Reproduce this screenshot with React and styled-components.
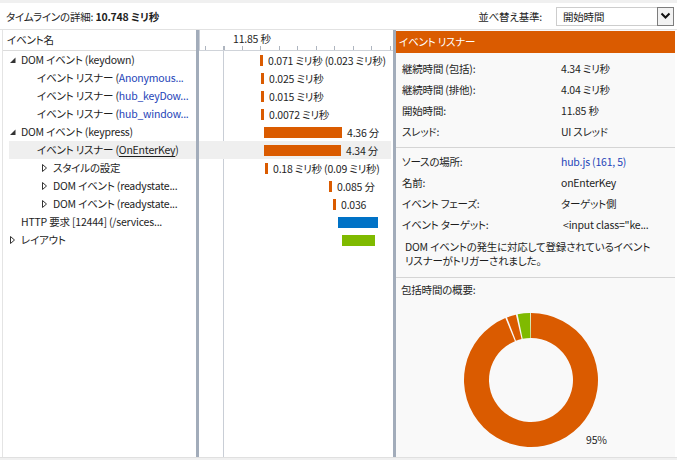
import React from 'react';
import styled, { createGlobalStyle } from 'styled-components';

const GlobalStyle = createGlobalStyle`
  html, body {
    margin: 0;
    padding: 0;
    background: #f0f0f0;
  }
  body {
    font-family: "Noto Sans CJK JP", "Noto Sans", sans-serif;
    font-size: 10.5px;
    letter-spacing: -0.2px;
    color: #1e1e1e;
    font-feature-settings: "palt";
  }
`;

const ORANGE = '#da5b00';
const BLUE_LINK = '#1e44b8';

const Page = styled.div`
  width: 677px;
  height: 460px;
  box-sizing: border-box;
  padding: 3px 0 2px 0;
  background: #f0f0f0;
  display: flex;
  flex-direction: column;
  overflow: hidden;
`;

const TopBar = styled.header`
  height: 26px;
  flex: none;
  background: #fff;
  border-bottom: 1px solid #e2e2e2;
  display: flex;
  align-items: center;
  justify-content: space-between;
  padding: 0 3px 0 6px;
`;

const Title = styled.div`
  white-space: nowrap;
  b {
    font-weight: 700;
  }
`;

const SortGroup = styled.div`
  display: flex;
  align-items: center;
  gap: 14px;
`;

const SortLabel = styled.span`
  white-space: nowrap;
`;

const Select = styled.div`
  width: 118px;
  height: 19px;
  box-sizing: border-box;
  border: 1px solid #cdcdcd;
  background: #fff;
  display: flex;
  align-items: stretch;
`;

const SelectValue = styled.span`
  flex: 1;
  padding-left: 6px;
  line-height: 17px;
`;

const DropButton = styled.span`
  width: 17px;
  box-sizing: border-box;
  border: 1px solid #7d7d7d;
  margin: -1px -1px -1px 0;
  background: #f2f2f2;
  display: flex;
  align-items: center;
  justify-content: center;
`;

const Main = styled.main`
  flex: 1;
  display: flex;
  background: #fff;
  border-bottom: 1px solid #e0e0e0;
  padding: 0 2px 0 2px;
  min-height: 0;
`;

const TreePane = styled.section`
  width: 193px;
  flex: none;
  border-left: 1px solid #e4e4e4;
  overflow: hidden;
`;

const ColumnHeader = styled.div`
  height: 20px;
  line-height: 20px;
  border-bottom: 1px solid #dcdcdc;
  padding-left: 4px;
`;

const Splitter = styled.div`
  width: 3px;
  flex: none;
  background: #a2acba;
`;

const TreeRow = styled.div`
  height: 18px;
  line-height: 18px;
  margin-left: 6px;
  padding-left: ${(p) => p.$level * 16}px;
  display: flex;
  align-items: center;
  white-space: nowrap;
  background: ${(p) => (p.$selected ? '#efefef' : 'transparent')};
`;

const Expander = styled.span`
  width: 12px;
  height: 18px;
  flex: none;
  display: inline-flex;
`;

const Link = styled.span`
  color: ${BLUE_LINK};
`;

const Underlined = styled.span`
  text-decoration: underline;
  text-underline-offset: 2px;
`;

const TimelinePane = styled.section`
  width: 194px;
  flex: none;
  overflow: hidden;
  background: linear-gradient(#c9ced6, #c9ced6) 24px 0 / 1px 100% no-repeat, #fff;
`;

const Ruler = styled.div`
  height: 20px;
  line-height: 18px;
  border-bottom: 1px solid #cfd3d9;
  padding-left: 34px;
  background: #fff;
  background-image: repeating-linear-gradient(
    to right,
    #aeb5bf 0 1px,
    transparent 1px 18.5px
  );
  background-position: 6px 100%;
  background-size: 100% 4px;
  background-repeat: no-repeat;
  box-shadow: inset 24px 0 0 -23px #c9ced6;
`;

const BarRow = styled.div`
  height: 18px;
  display: flex;
  align-items: center;
  white-space: nowrap;
  background: ${(p) => (p.$selected ? '#efefef' : 'transparent')};
  margin-right: 2px;
`;

const Bar = styled.span`
  flex: none;
  height: 11px;
  width: ${(p) => p.$width}px;
  margin-left: ${(p) => p.$start}px;
  background: ${(p) => p.$color};
`;

const BarLabel = styled.span`
  margin-left: 5px;
`;

const DetailPane = styled.section`
  flex: 1;
  min-width: 0;
  background: #f9f9f9;
  padding-top: 1px;
  display: flex;
  flex-direction: column;
`;

const DetailHeader = styled.div`
  height: 22px;
  line-height: 22px;
  background: ${ORANGE};
  color: #fff;
  padding-left: 3px;
`;

const Section = styled.div`
  padding: ${(p) => p.$pad};
  border-top: ${(p) => (p.$divider ? '1px solid #d5d5d5' : 'none')};
`;

const PropGrid = styled.div`
  display: grid;
  grid-template-columns: 159px 1fr;
  grid-auto-rows: 21px;
  align-items: center;
  padding-left: 6px;
  white-space: nowrap;
`;

const Value = styled.span`
  color: ${(p) => (p.$link ? BLUE_LINK : 'inherit')};
  padding-left: ${(p) => p.$shift || 0}px;
`;

const Description = styled.p`
  margin: 5px 0 0 9px;
  line-height: 14px;
`;

const ChartSection = styled.div`
  flex: 1;
  border-top: 1px solid #d5d5d5;
  padding: 4px 5px 0 5px;
`;

const ChartTitle = styled.div`
  height: 16px;
  line-height: 16px;
`;

const Donut = styled.svg`
  display: block;
  margin: 7px 0 0 55px;
  overflow: visible;
`;

const treeRows = [
  { level: 0, exp: 'open', text: 'DOM イベント (keydown)' },
  { level: 1, text: 'イベント リスナー (', link: 'Anonymous...' },
  { level: 1, text: 'イベント リスナー (', link: 'hub_keyDow...' },
  { level: 1, text: 'イベント リスナー (', link: 'hub_window...' },
  { level: 0, exp: 'open', text: 'DOM イベント (keypress)' },
  { level: 1, text: 'イベント リスナー (', under: 'OnEnterKey', tail: ')', selected: true },
  { level: 2, exp: 'closed', text: 'スタイルの設定' },
  { level: 2, exp: 'closed', text: 'DOM イベント (readystate...' },
  { level: 2, exp: 'closed', text: 'DOM イベント (readystate...' },
  { level: 0, text: 'HTTP 要求 [12444] (/services...' },
  { level: 0, exp: 'closed', text: 'レイアウト' },
];

const bars = [
  { start: 61, width: 3, color: ORANGE, label: '0.071 ミリ秒 (0.023 ミリ秒)' },
  { start: 62, width: 3, color: ORANGE, label: '0.025 ミリ秒' },
  { start: 62, width: 3, color: ORANGE, label: '0.015 ミリ秒' },
  { start: 62, width: 3, color: ORANGE, label: '0.0072 ミリ秒' },
  { start: 65, width: 78, color: ORANGE, label: '4.36 分' },
  { start: 65, width: 77, color: ORANGE, label: '4.34 分', selected: true },
  { start: 66, width: 3, color: ORANGE, label: '0.18 ミリ秒 (0.09 ミリ秒)' },
  { start: 130, width: 3, color: ORANGE, label: '0.085 分' },
  { start: 134, width: 3, color: ORANGE, label: '0.036' },
  { start: 139, width: 40, color: '#0072c6' },
  { start: 143, width: 33, color: '#7fba00' },
];

const summary = [
  ['継続時間 (包括):', '4.34 ミリ秒'],
  ['継続時間 (排他):', '4.04 ミリ秒'],
  ['開始時間:', '11.85 秒'],
  ['スレッド:', 'UI スレッド'],
];

const slices = [
  { from: 0, to: 337.5, color: ORANGE },
  { from: 339, to: 347, color: ORANGE },
  { from: 348.5, to: 359.3, color: '#7fba00' },
];

function arc(cx, cy, r0, r1, a0, a1) {
  const p = (r, a) => {
    const rad = ((a - 90) * Math.PI) / 180;
    return [cx + r * Math.cos(rad), cy + r * Math.sin(rad)];
  };
  const large = a1 - a0 > 180 ? 1 : 0;
  const [x0, y0] = p(r1, a0);
  const [x1, y1] = p(r1, a1);
  const [x2, y2] = p(r0, a1);
  const [x3, y3] = p(r0, a0);
  return `M${x0} ${y0}A${r1} ${r1} 0 ${large} 1 ${x1} ${y1}L${x2} ${y2}A${r0} ${r0} 0 ${large} 0 ${x3} ${y3}Z`;
}

function ExpanderIcon({ kind }) {
  if (!kind) return <Expander />;
  return (
    <Expander>
      <svg width="12" height="18" viewBox="0 0 12 18">
        {kind === 'open' ? (
          <polygon points="6.5,6.5 6.5,12 1,12" fill="#333" />
        ) : (
          <polygon points="1.5,5.5 5.5,9 1.5,12.5" fill="none" stroke="#333" strokeWidth="1" />
        )}
      </svg>
    </Expander>
  );
}

export default function App() {
  return (
    <>
      <GlobalStyle />
      <Page>
        <TopBar>
          <Title>
            タイムラインの詳細: <b>10.748 ミリ秒</b>
          </Title>
          <SortGroup>
            <SortLabel>並べ替え基準:</SortLabel>
            <Select>
              <SelectValue>開始時間</SelectValue>
              <DropButton>
                <svg width="11" height="8" viewBox="0 0 11 8">
                  <polyline points="1.5,1.5 5.5,5.5 9.5,1.5" fill="none" stroke="#111" strokeWidth="2" />
                </svg>
              </DropButton>
            </Select>
          </SortGroup>
        </TopBar>
        <Main>
          <TreePane>
            <ColumnHeader>イベント名</ColumnHeader>
            {treeRows.map((row, i) => (
              <TreeRow key={i} $level={row.level} $selected={row.selected}>
                <ExpanderIcon kind={row.exp} />
                <span>
                  {row.text}
                  {row.link && <Link>{row.link}</Link>}
                  {row.under && <Underlined>{row.under}</Underlined>}
                  {row.tail}
                </span>
              </TreeRow>
            ))}
          </TreePane>
          <Splitter />
          <TimelinePane>
            <Ruler>11.85 秒</Ruler>
            {bars.map((b, i) => (
              <BarRow key={i} $selected={b.selected}>
                <Bar $start={b.start} $width={b.width} $color={b.color} />
                {b.label && <BarLabel>{b.label}</BarLabel>}
              </BarRow>
            ))}
          </TimelinePane>
          <Splitter />
          <DetailPane>
            <DetailHeader>イベント リスナー</DetailHeader>
            <Section $pad="5px 0 5px 0">
              <PropGrid>
                {summary.map(([k, v]) => (
                  <React.Fragment key={k}>
                    <span>{k}</span>
                    <Value>{v}</Value>
                  </React.Fragment>
                ))}
              </PropGrid>
            </Section>
            <Section $divider $pad="3px 0 9px 0">
              <PropGrid>
                <span>ソースの場所:</span>
                <Value $link>hub.js (161, 5)</Value>
                <span>名前:</span>
                <Value>onEnterKey</Value>
                <span>イベント フェーズ:</span>
                <Value>ターゲット側</Value>
                <span>イベント ターゲット:</span>
                <Value $shift={2}>&lt;input class="ke...</Value>
              </PropGrid>
              <Description>
                DOM イベントの発生に対応して登録されているイベント
                <br />
                リスナーがトリガーされました。
              </Description>
            </Section>
            <ChartSection>
              <ChartTitle>包括時間の概要:</ChartTitle>
              <Donut width="150" height="150" viewBox="0 0 150 150">
                {slices.map((s, i) => (
                  <path key={i} d={arc(75, 75, 42, 67, s.from, s.to)} fill={s.color} />
                ))}
                <text x="130" y="139" fontSize="10.5" fill="#1e1e1e" fontFamily="Noto Sans CJK JP, sans-serif">
                  95%
                </text>
              </Donut>
            </ChartSection>
          </DetailPane>
        </Main>
      </Page>
    </>
  );
}
